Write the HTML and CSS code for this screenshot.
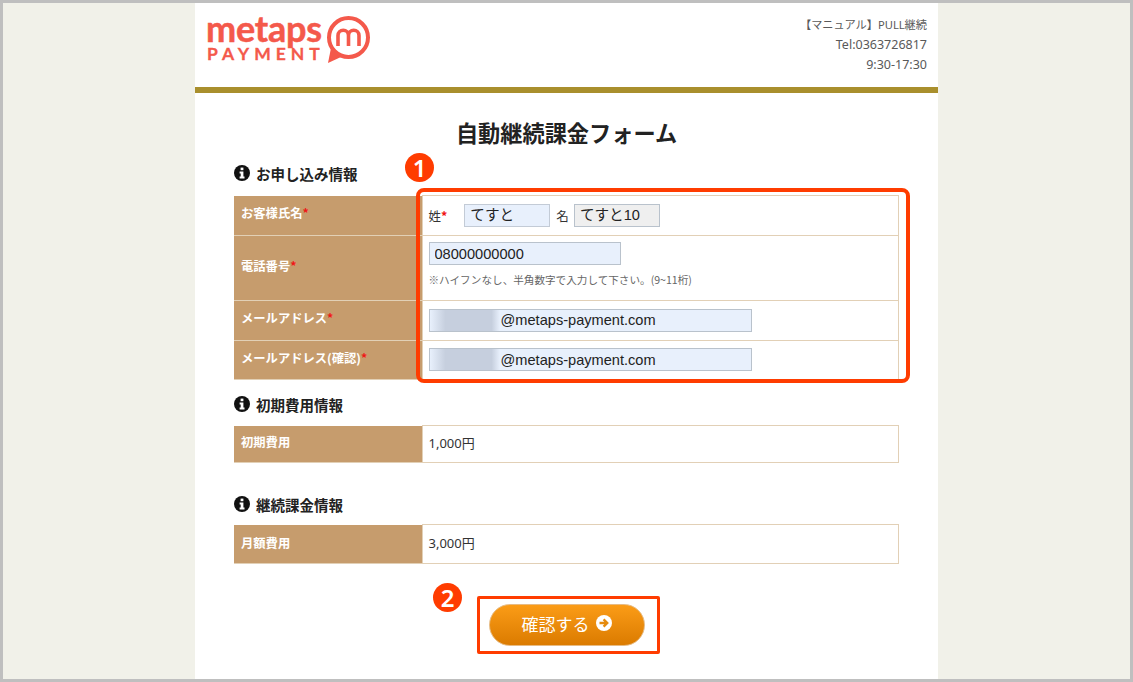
FILE: index.html
```html
<!DOCTYPE html>
<html lang="ja">
<head>
    <meta charset="UTF-8">
    <title>自動継続課金フォーム</title>
    <link rel="stylesheet" href="styles.css">
</head>
<body>
    <div class="frame">
        <div class="wrapper">
            <header class="header">
                <div class="logo">
                    <div class="logo-words">
                        <div class="logo-name">metaps</div>
                        <div class="logo-sub">PAYMENT</div>
                    </div>
                    <svg class="logo-mark" width="46" height="50" viewBox="0 0 46 50">
                        <path class="logo-tail" d="M6 33 L3 48 L16 42 Z"/>
                        <circle class="logo-ring" cx="23.5" cy="22.5" r="19.5"/>
                        <path class="logo-m" d="M13 31V20.500a4.700 4.700 0 0 1 10.500 0V31M23.500 20.500a4.700 4.700 0 0 1 10.500 0V31"/>
                    </svg>
                </div>
                <div class="shop-info">
                    <div class="shop-name">【マニュアル】PULL継続</div>
                    <div>Tel:0363726817</div>
                    <div>9:30-17:30</div>
                </div>
            </header>

            <main class="content">
                <h1>自動継続課金フォーム</h1>

                <h2 class="section-title first">
                    <svg class="info-icon" width="16" height="16" viewBox="0 0 16 16"><circle cx="8" cy="8" r="8"/><rect class="cut" x="6.6" y="2.6" width="2.8" height="2.6"/><path class="cut" d="M5.6 6.4h3.8v5h1.1v2h-4.9v-2h1.1v-3h-1.1z"/></svg>
                    お申し込み情報
                </h2>
                <table class="info-table">
                    <tr class="row-name">
                        <th>お客様氏名<span class="req">*</span></th>
                        <td>
                            <div class="name-fields">
                                <span class="field-label">姓<span class="req">*</span></span>
                                <input class="text-input last-name" type="text" value="てすと">
                                <span class="field-label">名</span>
                                <input class="text-input first-name" type="text" value="てすと10">
                            </div>
                        </td>
                    </tr>
                    <tr class="row-tel">
                        <th>電話番号<span class="req">*</span></th>
                        <td>
                            <input class="text-input tel" type="text" value="08000000000">
                            <p class="note">※ハイフンなし、半角数字で入力して下さい。(9~11桁)</p>
                        </td>
                    </tr>
                    <tr class="row-mail">
                        <th>メールアドレス<span class="req">*</span></th>
                        <td><input class="text-input mail" type="text" value="@metaps-payment.com"></td>
                    </tr>
                    <tr class="row-mail">
                        <th>メールアドレス(確認)<span class="req">*</span></th>
                        <td><input class="text-input mail" type="text" value="@metaps-payment.com"></td>
                    </tr>
                </table>

                <h2 class="section-title second">
                    <svg class="info-icon" width="16" height="16" viewBox="0 0 16 16"><circle cx="8" cy="8" r="8"/><rect class="cut" x="6.6" y="2.6" width="2.8" height="2.6"/><path class="cut" d="M5.6 6.4h3.8v5h1.1v2h-4.9v-2h1.1v-3h-1.1z"/></svg>
                    初期費用情報
                </h2>
                <table class="info-table">
                    <tr class="row-initial">
                        <th>初期費用</th>
                        <td>1,000円</td>
                    </tr>
                </table>

                <h2 class="section-title third">
                    <svg class="info-icon" width="16" height="16" viewBox="0 0 16 16"><circle cx="8" cy="8" r="8"/><rect class="cut" x="6.6" y="2.6" width="2.8" height="2.6"/><path class="cut" d="M5.6 6.4h3.8v5h1.1v2h-4.9v-2h1.1v-3h-1.1z"/></svg>
                    継続課金情報
                </h2>
                <table class="info-table">
                    <tr class="row-monthly">
                        <th>月額費用</th>
                        <td>3,000円</td>
                    </tr>
                </table>

                <div class="actions">
                    <button class="submit-btn" type="button">
                        確認する
                        <svg width="16" height="16" viewBox="0 0 16 16"><circle cx="8" cy="8" r="8" fill="#fff"/><path d="M3.500 8h7M7.600 4.400 11.200 8l-3.600 3.600" fill="none" stroke="#e58a0c" stroke-width="2.400"/></svg>
                    </button>
                </div>
            </main>
        </div>
    </div>

    <!-- annotations drawn over the screen capture -->
    <div class="mark-box box-form"></div>
    <div class="mark-box box-button"></div>
    <div class="mark-num num-one">1</div>
    <div class="mark-num num-two">2</div>
</body>
</html>
```

FILE: styles.css
```css
* {
    margin: 0;
    padding: 0;
    box-sizing: border-box;
}

html, body {
    height: 682px;
    overflow: hidden;
}

body {
    font-family: "Noto Sans CJK JP", "Noto Sans", sans-serif;
    background: #fff;
    color: #333;
}

.frame {
    height: 682px;
    border: 3px solid #bfbfbf;
    background: #f1f1e9;
    overflow: hidden;
}

.wrapper {
    width: 743px;
    height: 100%;
    margin-left: 192px;
    background: #fff;
}

.header {
    height: 90px;
    border-bottom: 6px solid #a98f2d;
    display: flex;
    justify-content: space-between;
    padding: 9px 11px 0 12px;
}

.logo {
    display: flex;
    align-items: flex-start;
    color: #f4594b;
    font-family: Lato, sans-serif;
    font-weight: 700;
}

.logo-words {
    width: 117px;
    flex: none;
}

.logo-name {
    font-size: 36px;
    line-height: 32px;
    letter-spacing: -0.2px;
    margin-left: -1px;
    -webkit-text-stroke: 0.5px #f4594b;
}

.logo-sub {
    font-size: 17.5px;
    line-height: 19px;
    letter-spacing: 5px;
    white-space: nowrap;
    -webkit-text-stroke: 0.3px #f4594b;
}

.logo-mark {
    display: block;
    margin-left: 1px;
    margin-top: 3px;
}

.logo-ring {
    fill: #fff;
    stroke: #f4594b;
    stroke-width: 4;
}

.logo-tail {
    fill: #f4594b;
}

.logo-m {
    fill: none;
    stroke: #f4594b;
    stroke-width: 3.600;
}

.shop-info {
    text-align: right;
    font-family: "Noto Sans", "Noto Sans CJK JP", sans-serif;
    font-size: 12.5px;
    line-height: 20px;
    color: #595959;
    padding-top: 3px;
}

.shop-name {
    font-size: 11.2px;
}

.content {
    padding: 0 39px;
}

h1 {
    margin-top: 24px;
    font-size: 22.2px;
    line-height: 30px;
    font-weight: 700;
    text-align: center;
    color: #222;
}

.section-title {
    display: flex;
    align-items: center;
    gap: 6px;
    height: 20px;
    font-size: 14.5px;
    font-weight: 700;
    color: #222;
}

.section-title.first {
    margin-top: 16px;
    margin-bottom: 12px;
}

.section-title.second {
    margin-top: 14px;
    margin-bottom: 11px;
}

.section-title.third {
    margin-top: 31px;
    margin-bottom: 10px;
}

.info-icon {
    fill: #111;
    flex: none;
}

.info-icon .cut {
    fill: #fff;
}

.info-table {
    width: 665px;
    border-collapse: collapse;
    table-layout: fixed;
}

.info-table th {
    width: 188px;
    padding: 0 7px;
    background: #c69c6d;
    border-bottom: 1px solid #e2d0b6;
    color: #fff;
    font-size: 12.3px;
    font-weight: 700;
    text-align: left;
    vertical-align: middle;
}

.info-table td {
    padding: 0 6px;
    background: #fff;
    border: 1px solid #e2d0b6;
    font-family: "Noto Sans", "Noto Sans CJK JP", sans-serif;
    font-size: 13px;
    color: #333;
}

.row-name { height: 40px; }
.row-tel { height: 65px; }
.row-mail { height: 39.5px; }
.row-initial { height: 37px; }
.row-monthly { height: 39px; }

.row-name th { padding-bottom: 4px; }
.row-tel th { padding-bottom: 4px; }
.row-mail th { padding-bottom: 4px; }
.row-initial th, .row-initial td { padding-bottom: 4px; }
.row-monthly th { padding-bottom: 2px; }
.row-monthly td { padding-bottom: 4px; }

.row-tel td {
    vertical-align: top;
    padding-top: 6px;
}

.req {
    color: #f01616;
    font-weight: 700;
}

.name-fields {
    display: flex;
    align-items: center;
}

.field-label {
    font-family: "Noto Sans CJK JP", sans-serif;
    font-size: 12.5px;
    color: #333;
}

.text-input {
    display: block;
    height: 23px;
    padding: 0 5px;
    border: 1px solid #b9c2cc;
    background: #e8f0fc;
    color: #222;
    font-family: "Liberation Sans", "Noto Sans CJK JP", sans-serif;
    font-size: 14.6px;
}

.last-name {
    width: 86px;
    margin-left: 17px;
    margin-right: 6px;
    padding-bottom: 5px;
    border-color: #c3cbd6;
}

.first-name {
    width: 86px;
    margin-left: 5px;
    padding-bottom: 5px;
    background: #efefef;
}

.tel {
    width: 192px;
}

.note {
    margin-top: 7px;
    font-family: "Noto Sans CJK JP", sans-serif;
    font-size: 10.6px;
    color: #666;
}

/* blurred local part of the address */
.mail {
    width: 323px;
    padding-left: 71px;
    background-image: linear-gradient(to right, #e8f0fc, #c6cfde 22%, #c6cfde 88%, #e8f0fc);
    background-size: 70px 100%;
    background-repeat: no-repeat;
}

.actions {
    display: flex;
    justify-content: center;
    margin-top: 40px;
}

.submit-btn {
    display: flex;
    align-items: center;
    justify-content: center;
    gap: 6px;
    width: 156px;
    height: 42px;
    padding-bottom: 4px;
    border: 1px solid #e7bb83;
    border-radius: 21px;
    background: linear-gradient(#fb9c17, #db7b00);
    color: #fff;
    font-family: inherit;
    font-size: 17px;
}

.mark-box {
    position: absolute;
    border-style: solid;
    border-color: #ff3c00;
}

.box-form {
    left: 416px;
    top: 188px;
    width: 494px;
    height: 195px;
    border-width: 4px;
    border-radius: 8px;
}

.box-button {
    left: 477px;
    top: 596px;
    width: 183px;
    height: 58px;
    border-width: 3px;
    border-radius: 2px;
}

.mark-num {
    position: absolute;
    width: 29px;
    height: 29px;
    border-radius: 50%;
    background: #ff3c00;
    color: #fff;
    font-family: "Noto Sans", sans-serif;
    font-weight: 600;
    font-size: 24px;
    line-height: 29px;
    text-align: center;
}

.num-one {
    left: 405px;
    top: 153px;
}

.num-two {
    left: 433px;
    top: 583px;
}
```
